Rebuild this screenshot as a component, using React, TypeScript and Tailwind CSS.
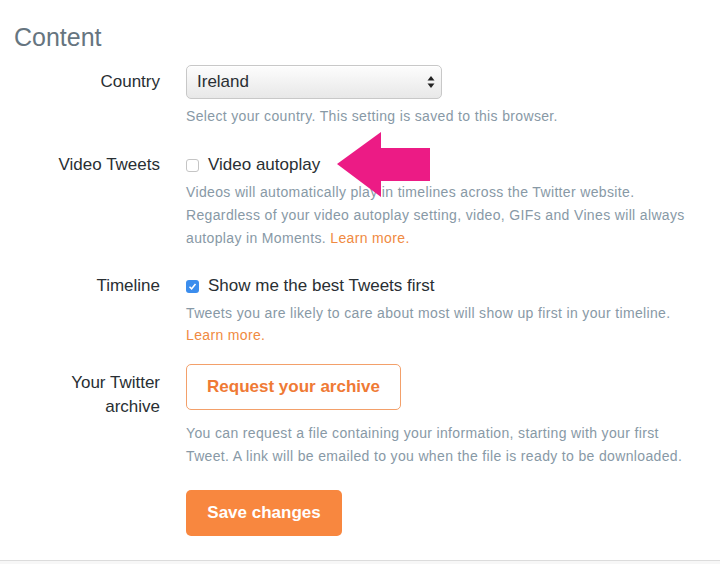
import React from "react";

const font = { fontFamily: '"Liberation Sans", Arial, Helvetica, sans-serif' };

function Row({ label, children, className = "" }: { label: React.ReactNode; children: React.ReactNode; className?: string }) {
  return (
    <div className={"flex " + className}>
      <div className="w-[160px] shrink-0 text-right text-[17px] leading-[24px] text-[#292f33]">{label}</div>
      <div className="ml-[26px] flex-1">{children}</div>
    </div>
  );
}

const desc = "text-[14px] tracking-[0.35px] leading-[23px] text-[#8899a6]";

export default function App() {
  return (
    <div className="relative w-[720px] h-[564px] overflow-hidden bg-white" style={font}>
      <div className="pt-[21px] pl-[14px] text-[25px] leading-[32px] text-[#66757f]">Content</div>

      <Row label={<span className="leading-[34px] block">Country</span>} className="mt-[12px]">
        <div className="relative w-[256px] h-[34px] rounded-[5px] border border-[#c8c8c8] bg-gradient-to-b from-[#fdfdfd] to-[#e8e8e8] shadow-[inset_0_1px_0_#fff]">
          <span className="absolute left-[10px] top-0 leading-[32px] text-[17px] text-[#292f33]">Ireland</span>
          <svg className="absolute right-[6px] top-[9px]" width="8" height="14" viewBox="0 0 8 14">
            <path d="M4 1 L7.5 5.5 H0.5 Z" fill="#222" />
            <path d="M4 13 L7.5 8.5 H0.5 Z" fill="#222" />
          </svg>
        </div>
        <div className={"mt-[6px] " + desc}>Select your country. This setting is saved to this browser.</div>
      </Row>

      <Row label="Video Tweets" className="mt-[25px]">
        <div className="flex items-center h-[24px] text-[17px] text-[#292f33]">
          <span className="w-[13px] h-[13px] rounded-[3px] border border-[#c5c5c5] bg-white" />
          <span className="ml-[9px]">Video autoplay</span>
        </div>
        <div className={"mt-[4px] " + desc}>
          Videos will automatically play in timelines across the Twitter website.
          <br />
          Regardless of your video autoplay setting, video, GIFs and Vines will always
          <br />
          autoplay in Moments. <span className="text-[#f08a41]">Learn more.</span>
        </div>
      </Row>

      <Row label="Timeline" className="mt-[24px]">
        <div className="flex items-center h-[24px] text-[17px] text-[#292f33]">
          <span className="flex items-center justify-center w-[13px] h-[13px] rounded-[3px] bg-[#3b8ded]">
            <svg width="9" height="9" viewBox="0 0 9 9">
              <path d="M1.5 4.8 L3.6 6.8 L7.5 2" fill="none" stroke="#fff" strokeWidth="1.5" />
            </svg>
          </span>
          <span className="ml-[9px]">Show me the best Tweets first</span>
        </div>
        <div className="mt-[4px] text-[14px] tracking-[0.35px] leading-[22px] text-[#8899a6]">
          Tweets you are likely to care about most will show up first in your timeline.
          <br />
          <span className="text-[#f08a41]">Learn more.</span>
        </div>
      </Row>

      <Row
        label={
          <span className="block pt-[7px]">
            Your Twitter
            <br />
            archive
          </span>
        }
        className="mt-[18px]"
      >
        <div className="flex items-center justify-center w-[215px] h-[46px] rounded-[5px] border border-[#f3a06a] bg-white text-[17px] font-bold text-[#ef7a35]">
          Request your archive
        </div>
        <div className={"mt-[12px] " + desc}>
          You can request a file containing your information, starting with your first
          <br />
          Tweet. A link will be emailed to you when the file is ready to be downloaded.
        </div>
        <div className="mt-[22px] flex items-center justify-center w-[156px] h-[46px] rounded-[5px] bg-[#f8873f] text-[17px] font-bold text-white">
          Save changes
        </div>
      </Row>

      <div className="absolute left-0 right-0 bottom-0 h-[4px] border-t border-[#dcdcdc] bg-[#f7f7f7]" />

      <svg className="absolute left-0 top-0 pointer-events-none" width="720" height="564" viewBox="0 0 720 564">
        <path d="M337 164 L381 132 L381 148 L430 148 L430 181 L381 181 L381 197 Z" fill="#ec1b85" />
      </svg>
    </div>
  );
}
